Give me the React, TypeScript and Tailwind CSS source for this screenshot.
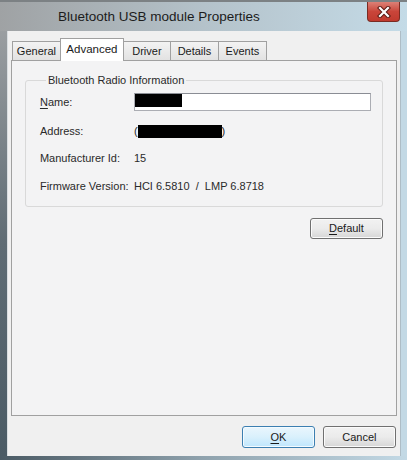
import React from "react";

const font = { fontFamily: '"Liberation Sans", Arial, sans-serif' };

function CloseX() {
  return (
    <svg width="14" height="12" viewBox="0 0 14 12">
      <path d="M3 2 L11 10 M11 2 L3 10" stroke="#5a1a14" strokeWidth="4.2" strokeLinecap="square" />
      <path d="M3 2 L11 10 M11 2 L3 10" stroke="#ffffff" strokeWidth="2.2" strokeLinecap="square" />
    </svg>
  );
}

function Tab({ label, w, selected, first }: { label: string; w: string; selected?: boolean; first?: boolean }) {
  if (selected) {
    return (
      <div
        className={`${w} ${first ? "" : "-ml-[1px]"} relative z-10 h-[23px] -mb-[1px] bg-white border border-b-0 border-[#a0a0a0] flex items-center justify-center text-[11.5px] text-[#1a1a1a]`}
      >
        {label}
      </div>
    );
  }
  return (
    <div
      className={`${w} ${first ? "" : "-ml-[1px]"} h-[19px] bg-gradient-to-b from-[#f3f3f3] to-[#e2e2e2] border border-b-0 border-[#a0a0a0] flex items-center justify-center text-[11px] text-[#1a1a1a] pt-[1px]`}
    >
      {label}
    </div>
  );
}

function Row({ label, children, underline }: { label: string; children: React.ReactNode; underline?: boolean }) {
  return (
    <div className="flex items-center h-[18px]">
      <div className="w-[94px] text-[11px] text-[#2a2a2a]">
        {underline ? (
          <>
            <span className="underline underline-offset-2">{label[0]}</span>
            {label.slice(1)}
          </>
        ) : (
          label
        )}
      </div>
      <div className="flex-1 flex items-center text-[11px] text-[#2a2a2a]">{children}</div>
    </div>
  );
}

export default function App() {
  return (
    <div className="w-[407px] h-[460px] flex flex-col overflow-hidden bg-[#c3d9e5]" style={font}>
      {/* Title bar */}
      <div className="h-[31px] flex items-start bg-gradient-to-r from-[#9fa2a4] via-[#b4c2ca] to-[#c4dbe7] border-t-[2px] border-[#7c8184]">
        <div className="flex-1 pl-[58px] pt-[7px] text-[13.5px] text-[#1c1c1c] leading-[16px]">
          Bluetooth USB module Properties
        </div>
        <div className="mt-0 mr-[7px] w-[33px] h-[20px] rounded-b-[4px] border border-t-0 border-[#7a2b22] bg-gradient-to-b from-[#dc8076] via-[#c9453a] to-[#c03a2e] flex items-center justify-center">
          <CloseX />
        </div>
      </div>

      {/* Middle */}
      <div className="flex flex-1 min-h-0">
        <div className="w-[8px] bg-gradient-to-b from-[#9a9ea1] via-[#5f6c74] to-[#4b5b65]" />
        <div className="flex-1 bg-[#f0f0f0] flex flex-col pt-[7px] px-[3px] border-l border-[#d8dde0]">
          {/* Tabs */}
          <div className="flex items-end pl-[1px] h-[22px]">
            <Tab label="General" w="w-[49px]" first />
            <Tab label="Advanced" w="w-[64px]" selected />
            <Tab label="Driver" w="w-[48px]" />
            <Tab label="Details" w="w-[49px]" />
            <Tab label="Events" w="w-[49px]" />
          </div>

          {/* Panel */}
          <div className="flex-1 bg-[#f3f3f4] border border-[#a0a0a0] px-[13px] pt-[11px]">
            <fieldset className="border border-[#d9d9d9] rounded-[3px] pl-[14px] pr-[11px] pb-[11px]">
              <legend className="ml-[6px] px-[2px] text-[11px] leading-[16px] text-[#2a2a2a]">
                Bluetooth Radio Information
              </legend>
              <div className="flex flex-col mt-[5px]">
                <Row label="Name:" underline>
                  <div className="w-[237px] h-[18px] bg-white border border-[#abadb3] border-t-[#8a8d94] flex items-start">
                    <div className="w-[47px] h-[13px] bg-black" />
                  </div>
                </Row>
                <div className="mt-[11px]">
                  <Row label="Address:">
                    <span>(</span>
                    <span className="inline-block w-[84px] h-[13px] bg-black" />
                    <span>)</span>
                  </Row>
                </div>
                <div className="mt-[9px]">
                  <Row label="Manufacturer Id:">15</Row>
                </div>
                <div className="mt-[10px]">
                  <Row label="Firmware Version:">
                    <span className="whitespace-pre">HCI 6.5810  /  LMP 6.8718</span>
                  </Row>
                </div>
              </div>
            </fieldset>
            <div className="flex justify-end mt-[11px]">
              <button className="w-[73px] h-[21px] rounded-[3px] border border-[#707070] bg-gradient-to-b from-[#f2f2f2] via-[#ebebeb] to-[#d6d6d6] text-[11px] text-[#1a1a1a] shadow-[inset_0_0_0_1px_#fbfbfb]">
                <span className="underline underline-offset-2">D</span>efault
              </button>
            </div>
          </div>

          {/* Buttons */}
          <div className="flex justify-end gap-[8px] pr-[1px] pt-[10px] pb-[8px]">
            <button className="w-[73px] h-[22px] rounded-[3px] border border-[#3c7fb1] bg-gradient-to-b from-[#eaf6fd] via-[#d9f0fc] to-[#bee6fd] text-[11px] text-[#1a1a1a] shadow-[inset_0_0_0_1px_#f4fbff]">
              <span className="underline underline-offset-2">O</span>K
            </button>
            <button className="w-[73px] h-[22px] rounded-[3px] border border-[#707070] bg-gradient-to-b from-[#f2f2f2] via-[#ebebeb] to-[#d6d6d6] text-[11px] text-[#1a1a1a] shadow-[inset_0_0_0_1px_#fbfbfb]">
              Cancel
            </button>
          </div>
        </div>
        <div className="w-[8px] bg-[#c3d9e5] border-l border-[#aebdc6]" />
      </div>

      {/* Bottom frame */}
      <div className="h-[4px] bg-gradient-to-r from-[#4b5b65] via-[#8fa2ad] to-[#c3d9e5]" />
    </div>
  );
}
